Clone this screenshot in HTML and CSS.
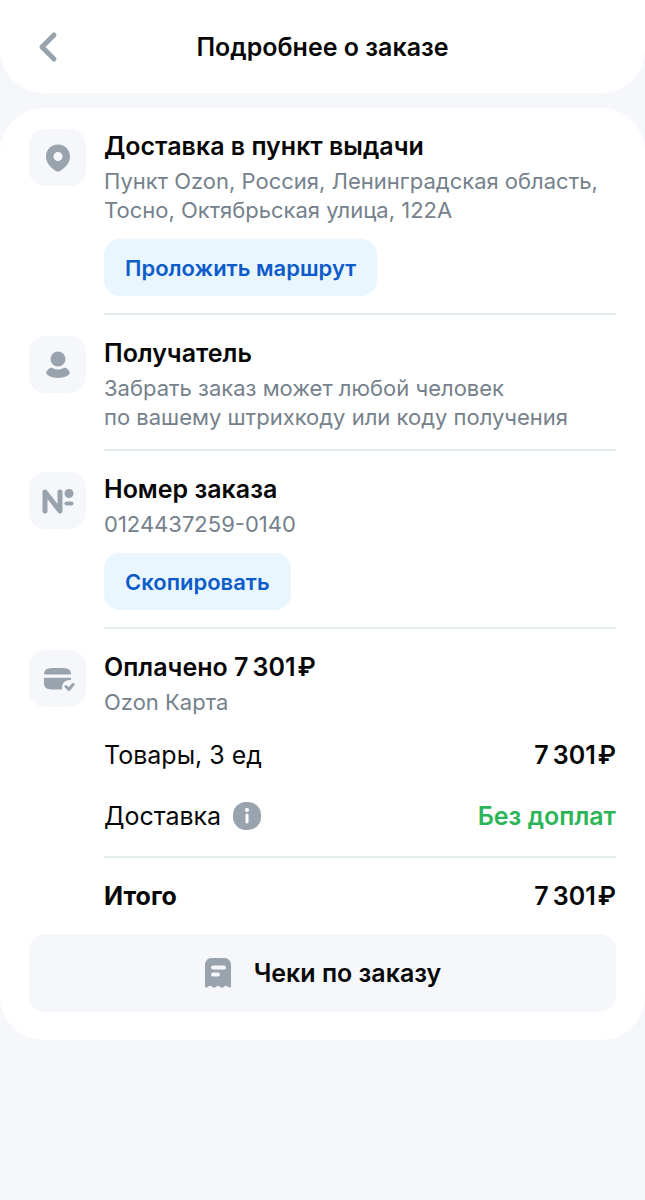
FILE: index.html
```html
<!DOCTYPE html>
<html lang="ru">
<head>
    <meta charset="UTF-8">
    <meta name="viewport" content="width=device-width, initial-scale=1.0">
    <title>Подробнее о заказе</title>
    <link rel="stylesheet" href="styles.css">
</head>
<body>
    <header class="header">
        <button class="back" type="button" aria-label="Назад">
            <svg width="24" height="32" viewBox="0 0 24 32" fill="none" stroke="currentColor" stroke-width="5" stroke-linecap="round" stroke-linejoin="round">
                <path d="M17 4 5 16l12 12"/>
            </svg>
        </button>
        <h1>Подробнее о заказе</h1>
    </header>

    <main class="card">
        <section class="section">
            <div class="icon">
                <svg width="34" height="34" viewBox="0 0 34 34" fill="currentColor">
                    <path fill-rule="evenodd" d="M17 3.500C10 3.500 5 8.500 5 15.500c0 6 4 10.500 9.500 14.300 1.600 1.100 3.400 1.100 5 0C25 26 29 21.500 29 15.500 29 8.500 24 3.500 17 3.500zm0 7.500a4.500 4.500 0 1 1 0 9 4.500 4.500 0 0 1 0-9z"/>
                </svg>
            </div>
            <div class="content">
                <h2>Доставка в пункт выдачи</h2>
                <p>Пункт Ozon, Россия, Ленинградская область, Тосно, Октябрьская улица, 122А</p>
                <button class="action" type="button">Проложить маршрут</button>
            </div>
        </section>

        <section class="section">
            <div class="icon">
                <svg width="34" height="34" viewBox="0 0 34 34" fill="currentColor">
                    <circle cx="17" cy="11" r="7.500"/>
                    <path d="M9 20c1-.6 2-.3 3 .3 3 1.700 7 1.700 10 0 1-.6 2-.9 3-.3 2 1.200 3.500 3 3.700 4.600.2 1.300-.5 2-1.600 2.600-6 3.700-14.200 3.700-20.200 0-1.100-.6-1.800-1.300-1.600-2.600.2-1.600 1.700-3.400 3.700-4.600z"/>
                </svg>
            </div>
            <div class="content">
                <h2>Получатель</h2>
                <p>Забрать заказ может любой человек<br>по вашему штрихкоду или коду получения</p>
            </div>
        </section>

        <section class="section">
            <div class="icon">
                <svg width="34" height="34" viewBox="0 0 34 34" fill="none" stroke="currentColor" stroke-linecap="round" stroke-linejoin="round">
                    <path stroke-width="5" d="M4 27V8l15 19V8"/>
                    <circle cx="28" cy="9.500" r="4.500" fill="currentColor" stroke="none"/>
                    <path stroke-width="4" d="M25.500 19.500H30.500"/>
                </svg>
            </div>
            <div class="content">
                <h2>Номер заказа</h2>
                <p>0124437259-0140</p>
                <button class="action" type="button">Скопировать</button>
            </div>
        </section>

        <section class="section">
            <div class="icon">
                <svg width="34" height="34" viewBox="0 0 34 34" fill="currentColor">
                    <path d="M3 12.500c0-4 2-6 6-6.300 5-.3 10-.3 15 0 4 .3 6 2.300 6 6.300z"/>
                    <path d="M3 15.800h27v2.400c-5.500-.8-9.500 2.800-8.800 9-4 .3-8.200.3-12.200 0-4-.3-6-2.300-6-6.300z"/>
                    <path d="m25 24.500 3 3 4-5" fill="none" stroke="currentColor" stroke-width="3" stroke-linecap="round" stroke-linejoin="round"/>
                </svg>
            </div>
            <div class="content">
                <h2>Оплачено 7&#8201;301&#8202;₽</h2>
                <p>Ozon Карта</p>
                <dl class="costs">
                    <div class="row">
                        <dt>Товары, 3 ед</dt>
                        <dd>7&#8201;301&#8202;₽</dd>
                    </div>
                    <div class="row">
                        <dt>Доставка
                            <button class="info" type="button" aria-label="О доставке">
                                <svg width="28" height="28" viewBox="0 0 28 28">
                                    <rect width="28" height="28" rx="13" fill="currentColor"/>
                                    <circle cx="14" cy="8" r="2" fill="#fff"/>
                                    <path d="M14 13v7" stroke="#fff" stroke-width="3" stroke-linecap="round"/>
                                </svg>
                            </button>
                        </dt>
                        <dd class="free">Без доплат</dd>
                    </div>
                    <div class="row total">
                        <dt>Итого</dt>
                        <dd>7&#8201;301&#8202;₽</dd>
                    </div>
                </dl>
            </div>
        </section>

        <button class="receipts" type="button">
            <svg width="28" height="32" viewBox="0 0 28 32">
                <path fill="currentColor" d="M1 8.500C1 3.500 3.500 1 8.500 1h11C24.500 1 27 3.500 27 8.500V29c0 1.500-1 2-2.300 1.200l-1.500-1c-1-.7-1.700-.7-2.700 0l-1 .8c-1.200 1-2.200 1-3.300 0l-.9-.8c-.8-.7-1.800-.7-2.600 0l-.9.800c-1.100 1-2.100 1-3.300 0l-1-.8c-1-.7-1.700-.7-2.700 0l-1.500 1C2 31 1 30.500 1 29z"/>
                <path d="M9 10.500h11M9 17.500h5" stroke="#f5f7fb" stroke-width="4" stroke-linecap="round"/>
            </svg>
            Чеки по заказу
        </button>
    </main>
</body>
</html>
```
FILE: styles.css
```css
* {
    box-sizing: border-box;
}
body {
    margin: 0;
    min-height: 100vh;
    background-color: #f5f7fb;
    color: #070707;
    font-family: Inter, "Noto Sans", sans-serif;
    font-size: 25px;
}
h1, h2, p, dl, dd {
    margin: 0;
}
button {
    border: none;
    font: inherit;
    color: inherit;
    cursor: pointer;
}
svg {
    display: block;
}
.header {
    display: grid;
    grid-template-columns: 40px 1fr 40px;
    align-items: center;
    height: 93px;
    padding: 0 29px;
    background-color: #fff;
    border-radius: 0 0 44px 44px;
}
.back {
    padding: 0 0 0 8px;
    background: none;
    color: #99a3ae;
}
h1 {
    font-size: 25px;
    font-weight: 600;
    text-align: center;
}
.card {
    margin-top: 15px;
    padding: 0 29px 28px;
    background-color: #fff;
    border-radius: 44px;
}
.section {
    display: flex;
    gap: 18px;
    padding-top: 21px;
}
.icon {
    display: flex;
    align-items: center;
    justify-content: center;
    flex: none;
    width: 57px;
    height: 57px;
    border-radius: 16px;
    background-color: #f5f7fb;
    color: #99a3ae;
}
.content {
    flex: 1;
    padding-bottom: 17px;
    border-bottom: 2px solid #e6edf1;
}
h2 {
    margin-bottom: 4px;
    font-size: 25px;
    font-weight: 600;
    line-height: 34px;
}
p {
    color: #75818c;
    font-size: 22px;
    line-height: 29px;
}
.action {
    height: 57px;
    margin-top: 14px;
    padding: 0 21px;
    border-radius: 16px;
    background-color: #e9f6fe;
    color: #0b5bcb;
    font-size: 22px;
    font-weight: 600;
}
.section:last-of-type .content {
    padding-bottom: 0;
    border-bottom: none;
}
.costs {
    padding-top: 7px;
}
.row {
    display: flex;
    align-items: center;
    justify-content: space-between;
    height: 61px;
}
dt {
    display: flex;
    align-items: center;
    gap: 12px;
}
dd {
    font-weight: 600;
}
.info {
    padding: 0;
    background: none;
    color: #99a3ae;
}
.free {
    color: #2cb558;
}
.total {
    height: 78px;
    margin-top: 10px;
    border-top: 2px solid #e6edf1;
    font-weight: 700;
}
.receipts {
    display: flex;
    align-items: center;
    justify-content: center;
    gap: 22px;
    width: 100%;
    height: 78px;
    border-radius: 16px;
    background-color: #f5f7fb;
    font-weight: 600;
}
.receipts svg {
    color: #99a3ae;
}
```
